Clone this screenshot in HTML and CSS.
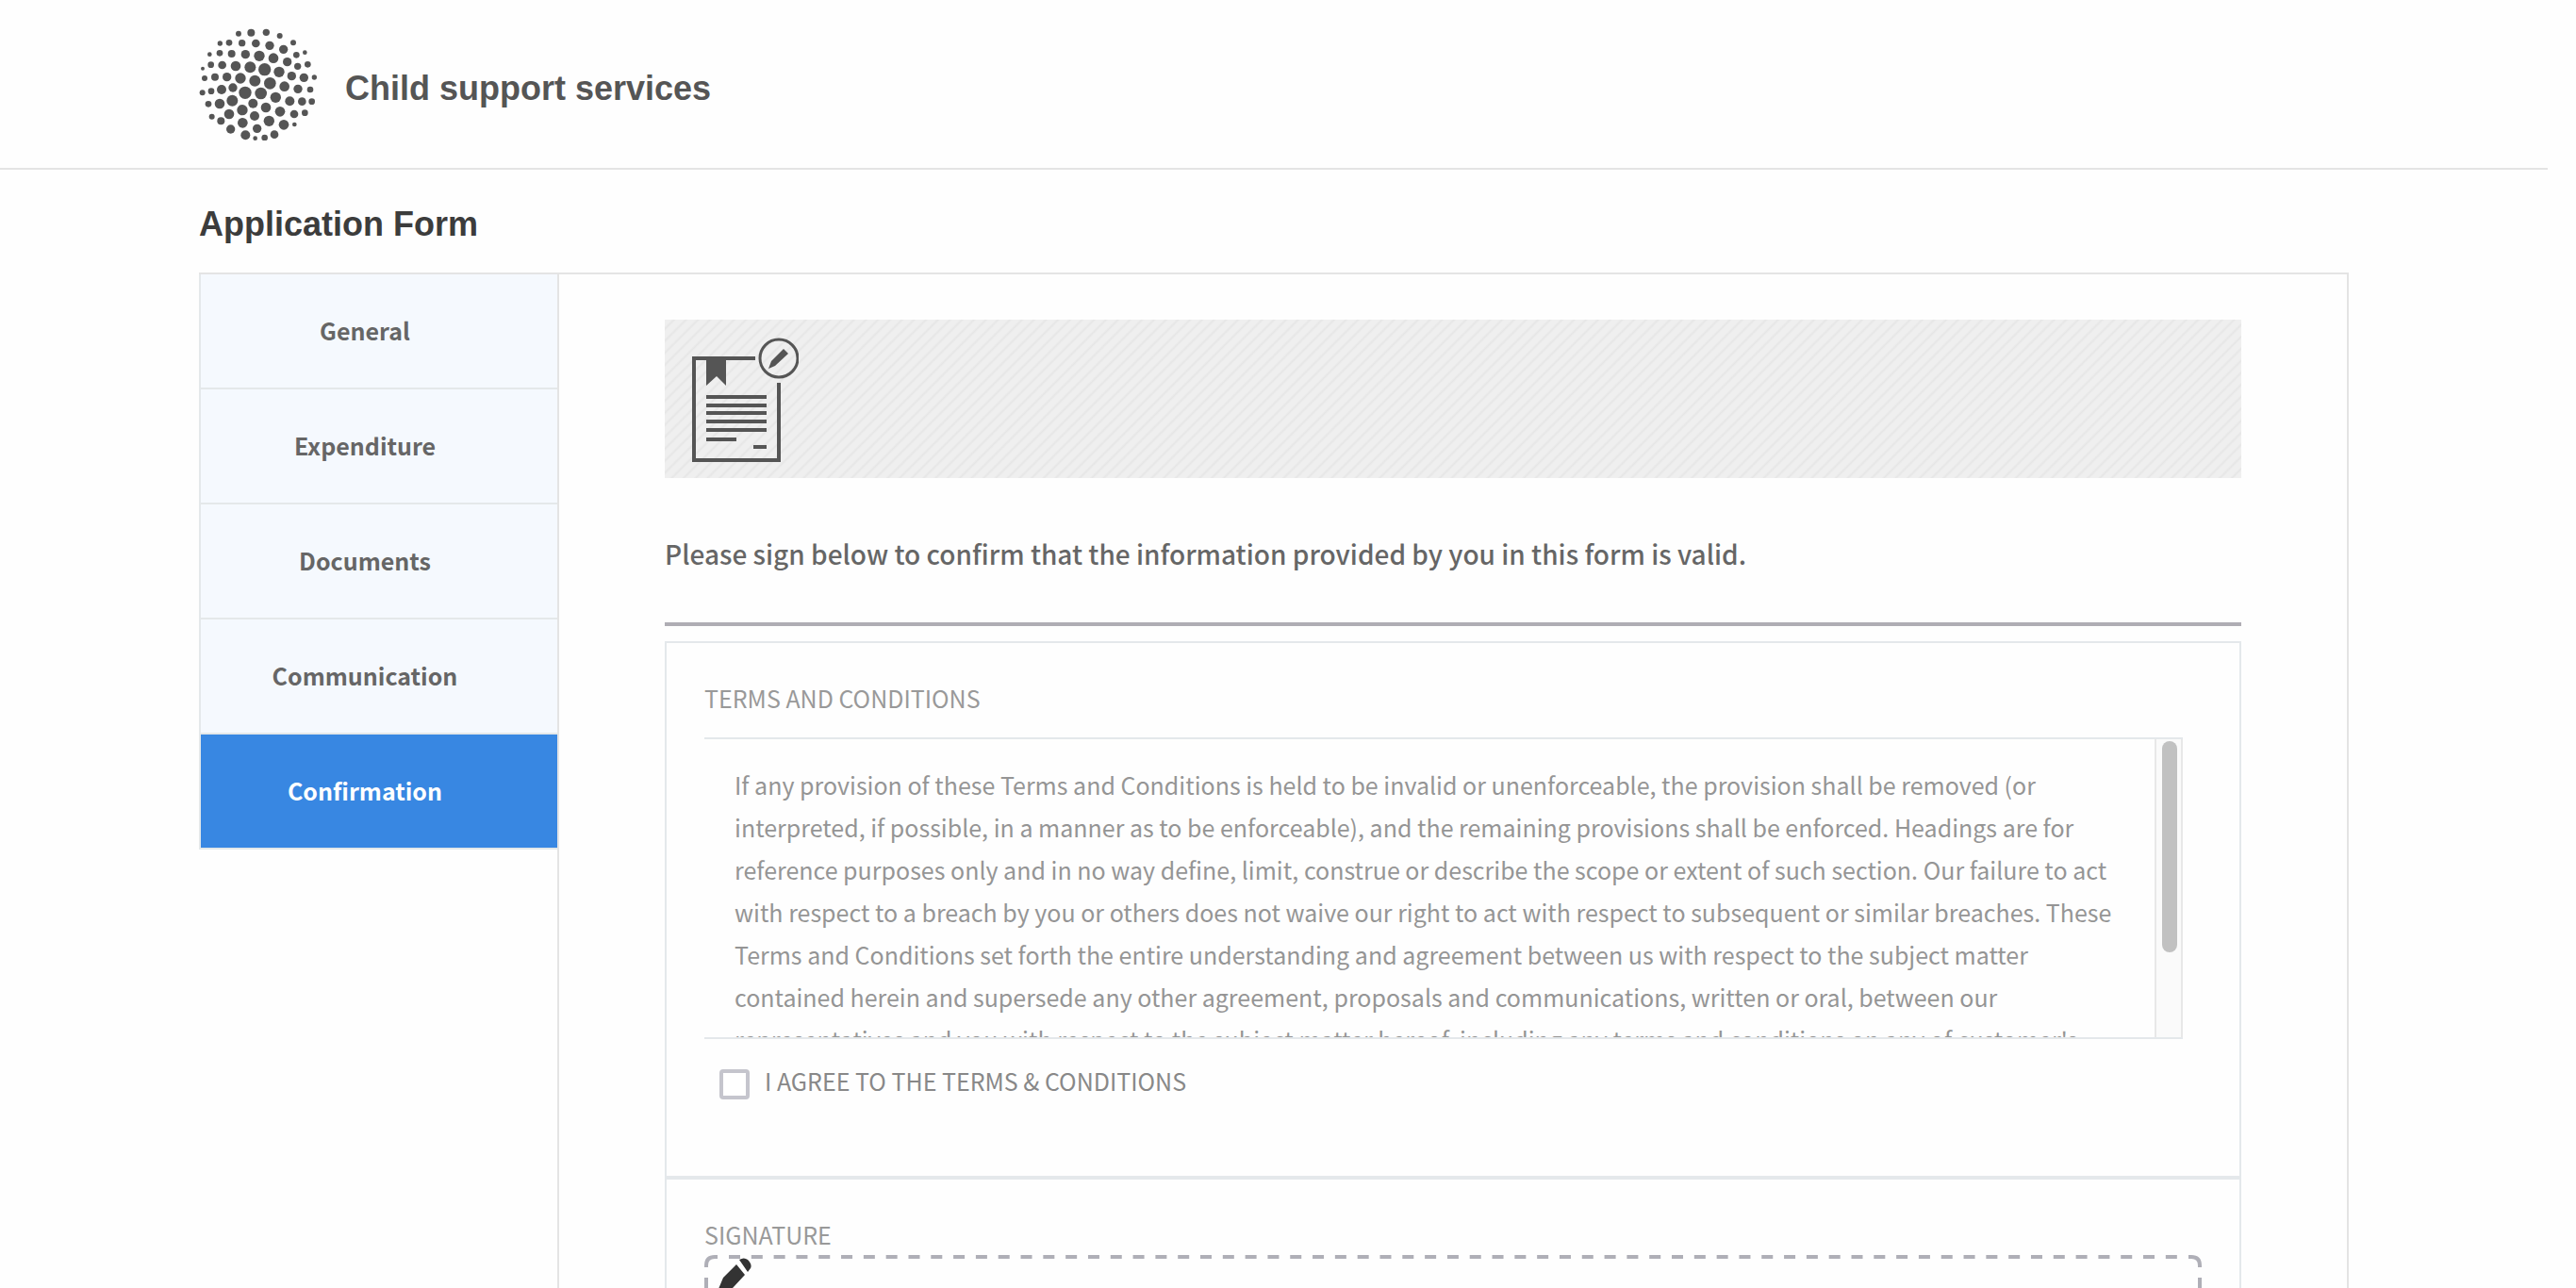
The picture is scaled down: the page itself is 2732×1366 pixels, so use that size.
FILE: index.html
```html
<!DOCTYPE html>
<html lang="en">
<head>
<meta charset="utf-8">
<title>Application Form</title>
<link rel="stylesheet" href="styles.css">
</head>
<body>
<header class="site-header">
  <div class="container brand">
    <svg class="logo" viewBox="63 60 378 357" fill="#555" aria-hidden="true">
      <circle cx="189" cy="77" r="9"/><circle cx="229" cy="74" r="12"/><circle cx="277" cy="73" r="11"/><circle cx="320" cy="84" r="9"/>
      <circle cx="130" cy="108" r="8"/><circle cx="159" cy="106" r="10"/><circle cx="200" cy="107" r="11"/><circle cx="244" cy="108" r="13"/><circle cx="288" cy="115" r="14"/><circle cx="332" cy="127" r="14"/><circle cx="363" cy="106" r="9"/>
      <circle cx="97" cy="143" r="7"/><circle cx="129" cy="139" r="10"/><circle cx="167" cy="141" r="12"/><circle cx="211" cy="143" r="14"/><circle cx="255" cy="148" r="17"/><circle cx="300" cy="155" r="16"/><circle cx="344" cy="167" r="14"/><circle cx="373" cy="145" r="10"/><circle cx="400" cy="137" r="7"/>
      <circle cx="75" cy="188" r="6"/><circle cx="101" cy="176" r="10"/><circle cx="137" cy="177" r="13"/><circle cx="180" cy="180" r="16"/><circle cx="226" cy="184" r="18"/><circle cx="272" cy="191" r="20"/><circle cx="318" cy="199" r="17"/><circle cx="358" cy="212" r="14"/><circle cx="377" cy="181" r="11"/><circle cx="409" cy="175" r="10"/>
      <circle cx="81" cy="219" r="9"/><circle cx="114" cy="215" r="12"/><circle cx="152" cy="215" r="14"/><circle cx="195" cy="219" r="17"/><circle cx="241" cy="227" r="18"/><circle cx="289" cy="235" r="19"/><circle cx="335" cy="245" r="16"/><circle cx="378" cy="253" r="14"/><circle cx="397" cy="217" r="14"/><circle cx="430" cy="216" r="8"/>
      <circle cx="74" cy="265" r="9"/><circle cx="102" cy="260" r="10"/><circle cx="135" cy="255" r="15"/><circle cx="171" cy="249" r="14"/><circle cx="210" cy="265" r="20"/><circle cx="260" cy="267" r="19"/><circle cx="307" cy="280" r="17"/><circle cx="352" cy="292" r="15"/><circle cx="391" cy="293" r="13"/><circle cx="417" cy="255" r="10"/><circle cx="422" cy="293" r="10"/>
      <circle cx="93" cy="301" r="10"/><circle cx="129" cy="300" r="16"/><circle cx="169" cy="290" r="18"/><circle cx="201" cy="320" r="17"/><circle cx="235" cy="299" r="15"/><circle cx="276" cy="312" r="16"/><circle cx="321" cy="325" r="16"/><circle cx="366" cy="333" r="13"/><circle cx="400" cy="329" r="10"/>
      <circle cx="104" cy="341" r="9"/><circle cx="133" cy="355" r="12"/><circle cx="159" cy="333" r="16"/><circle cx="202" cy="361" r="16"/><circle cx="240" cy="339" r="15"/><circle cx="286" cy="355" r="17"/><circle cx="333" cy="367" r="16"/><circle cx="367" cy="366" r="7"/>
      <circle cx="164" cy="381" r="14"/><circle cx="211" cy="400" r="15"/><circle cx="248" cy="379" r="14"/><circle cx="242" cy="410" r="7"/><circle cx="272" cy="408" r="10"/><circle cx="303" cy="398" r="13"/>
    </svg>
    <span class="brand-name">Child support services</span>
  </div>
</header>
<main class="container page">
  <h1 class="page-title">Application Form</h1>
  <div class="wizard">
    <nav class="steps" aria-label="Form steps">
      <a class="step" href="#general">General</a>
      <a class="step" href="#expenditure">Expenditure</a>
      <a class="step" href="#documents">Documents</a>
      <a class="step" href="#communication">Communication</a>
      <a class="step step-active" href="#confirmation" aria-current="step">Confirmation</a>
    </nav>
    <form class="content">
      <div class="banner">
        <svg class="banner-icon" viewBox="0 0 114 134" fill="none" stroke="#555" stroke-width="4" aria-hidden="true">
          <path d="M68 23H3V131H93V49"/>
          <path fill="#555" stroke="none" d="M16 23H37V52L27 42L16 52Z"/>
          <path d="M16 64H80M16 73H80M16 81H80M16 90H80M16 99H80M16 109H48M66 117H80"/>
          <circle cx="93" cy="23" r="20" stroke-width="3"/>
          <path fill="#555" stroke="none" d="M98 13L103 18L89 31L82 34L85 26Z"/>
        </svg>
      </div>
      <p class="lead">Please sign below to confirm that the information provided by you in this form is valid.</p>
      <div class="panel">
        <section class="terms">
          <h2 class="label">TERMS AND CONDITIONS</h2>
          <div class="terms-box">
            <p class="terms-text">If any provision of these Terms and Conditions is held to be invalid or unenforceable, the provision shall be removed (or interpreted, if possible, in a manner as to be enforceable), and the remaining provisions shall be enforced. Headings are for reference purposes only and in no way define, limit, construe or describe the scope or extent of such section. Our failure to act with respect to a breach by you or others does not waive our right to act with respect to subsequent or similar breaches. These Terms and Conditions set forth the entire understanding and agreement between us with respect to the subject matter contained herein and supersede any other agreement, proposals and communications, written or oral, between our representatives and you with respect to the subject matter hereof, including any terms and conditions on any of customer's</p>
            <div class="track"><div class="thumb"></div></div>
          </div>
          <label class="agree"><input class="tick" type="checkbox">I AGREE TO THE TERMS &amp; CONDITIONS</label>
        </section>
        <section class="signature">
          <h2 class="label">SIGNATURE</h2>
          <div class="pad">
            <svg class="pad-frame" aria-hidden="true">
              <g fill="none" stroke="#afafb7" stroke-width="4">
                <path d="M2 13V11Q2 2 11 2H14M2 24V36"/>
                <svg x="50%" overflow="visible"><path d="M-768 2H768" stroke-dasharray="12 11.81"/></svg>
                <svg x="100%" overflow="visible"><path d="M-2 13V11Q-2 2 -11 2H-14M-2 24V36"/></svg>
              </g>
              <path fill="#333" d="M37 5Q42 2 46 5Q51 10 49 14L46 18ZM34 10L43 21L30 35L4 60L15 36L20 24Z"/>
            </svg>
          </div>
        </section>
      </div>
    </form>
  </div>
</main>
</body>
</html>
```
FILE: styles.css
```css
* { box-sizing: border-box; }

body {
  margin: 0;
  min-height: 100vh;
  display: flex;
  flex-direction: column;
  padding-right: 30px;
  background: #fefefe;
  color: #666;
  font-family: "Noto Sans CJK SC", sans-serif;
}

h1, h2, p { margin: 0; }

.container {
  width: 100%;
  max-width: 2280px;
  margin: 0 auto;
}

.site-header { border-bottom: 2px solid #e4e4e4; }

.brand {
  display: flex;
  align-items: center;
  gap: 29px;
  height: 178px;
}

.logo { width: 126px; height: 119px; }

.brand-name, .page-title {
  font: bold 36px/44px "Liberation Sans", Arial, sans-serif;
}

.brand-name { color: #555; padding-top: 10px; }

.page {
  flex: 1;
  display: flex;
  flex-direction: column;
}

.page-title {
  padding: 36px 0 29px;
  color: #3c3c3c;
}

.wizard {
  flex: 1;
  display: flex;
  border: 2px solid #e4e4e4;
  border-width: 2px 2px 0 0;
}

.steps {
  flex: 0 0 382px;
  border-right: 2px solid #e4e4e4;
}

.step {
  display: flex;
  align-items: center;
  justify-content: center;
  height: 122px;
  padding: 0 30px 2px 0;
  border: 2px solid #e4e8ea;
  border-width: 0 0 2px 2px;
  background: #f5f9fe;
  color: #666;
  font-size: 25px;
  font-weight: 700;
  text-decoration: none;
}

.step-active { background: #3887e2; color: #fff; }

.content {
  flex: 1;
  min-width: 0;
  display: flex;
  flex-direction: column;
  padding: 48px 112px 0;
}

.banner {
  height: 168px;
  padding: 18px 28px;
  background: repeating-linear-gradient(135deg, #efefef 0 5px, #e6e6e6 7px, #efefef 9px);
}

.banner-icon { display: block; width: 114px; height: 134px; }

.lead {
  margin-top: 58px;
  padding-bottom: 51px;
  border-bottom: 4px solid #afadb4;
  font-size: 28px;
  font-weight: 500;
  line-height: 44px;
}

.panel {
  flex: 1;
  display: flex;
  flex-direction: column;
  margin-top: 16px;
  border: 2px solid #e4e8eb;
  border-bottom: 0;
}

.label {
  padding-bottom: 2px;
  color: #999;
  font-size: 25px;
  font-weight: 400;
  line-height: 40px;
}

.terms {
  padding: 38px 60px 81px 40px;
  border-bottom: 4px solid #e4e8eb;
}

.terms-box {
  display: flex;
  height: 320px;
  margin-top: 20px;
  border: 2px solid #e4e8eb;
  border-width: 2px 0;
  overflow: hidden;
}

.terms-text {
  flex: 1;
  padding: 26px 32px 0;
  color: #959595;
  font-size: 25px;
  line-height: 45px;
}

.track {
  flex: 0 0 30px;
  padding: 2px 4px 0 6px;
  border: 2px solid #e8e8e8;
  border-width: 0 2px;
  background: #fafafa;
}

.thumb { height: 224px; border-radius: 8px; background: #c1c1c1; }

.agree {
  display: flex;
  align-items: center;
  gap: 16px;
  margin: 24px 0 0 16px;
  color: #888;
  font-size: 25px;
  line-height: 40px;
}

.tick {
  appearance: none;
  width: 32px;
  height: 32px;
  margin: 8px 0 0;
  border: 4px solid #c5c5cd;
  border-radius: 4px;
  background: #fff;
}

.signature {
  flex: 1;
  display: flex;
  flex-direction: column;
  padding: 38px 40px 0;
}

.pad {
  flex: 1 0 35px;
  height: 0;
  overflow: hidden;
}

.pad-frame { display: block; width: 100%; height: 100%; }
```
